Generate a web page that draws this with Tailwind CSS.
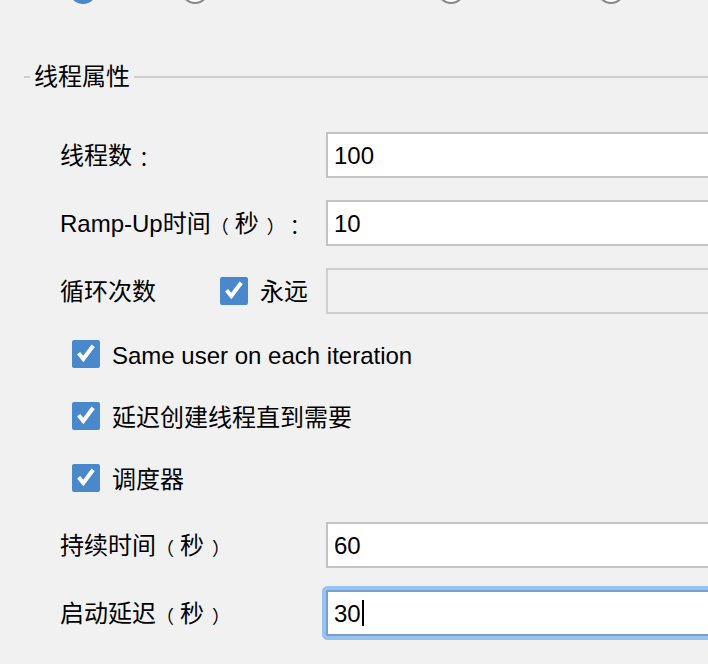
<!DOCTYPE html>
<html lang="zh-CN">
<head>
<meta charset="utf-8">
<meta name="viewport" content="width=device-width, initial-scale=1">
<title>线程属性</title>
<script src="https://cdn.jsdelivr.net/npm/@tailwindcss/browser@4"></script>
</head>
<body class="min-h-screen overflow-x-hidden bg-[#f1f1f1] font-['Liberation_Sans','Noto_Sans_CJK_SC',sans-serif] text-2xl text-black">
<form class="overflow-hidden pb-7">
  <!-- Action radios, scrolled mostly out of view -->
  <div class="flex h-1 items-end overflow-hidden pl-[69px]">
    <input type="radio" name="action" aria-label="继续" checked class="mr-21 size-7 shrink-0 appearance-none rounded-full bg-[#4a88cc]">
    <input type="radio" name="action" aria-label="启动下一进程循环" class="mr-57 size-7 shrink-0 appearance-none rounded-full border-2 border-[#888888] bg-white">
    <input type="radio" name="action" aria-label="停止线程" class="mr-33 size-7 shrink-0 appearance-none rounded-full border-2 border-[#888888] bg-white">
    <input type="radio" name="action" aria-label="停止测试" class="size-7 shrink-0 appearance-none rounded-full border-2 border-[#888888] bg-white">
  </div>

  <fieldset class="mt-[57px] ml-6 border-t-2 border-[#cfcfcf] pl-9">
    <legend class="-ml-[30px] px-1 leading-8">线程属性</legend>

    <div class="mt-[39px] flex flex-col gap-[22px]">
      <div class="flex items-center">
        <label for="threads" class="flex w-[266px] shrink-0 items-center pt-0.5 leading-8">线程数<span class="w-6 pt-1.5 text-center text-xl leading-8 font-['Noto_Sans_CJK_TC',sans-serif]" lang="zh-TW">：</span></label>
        <input id="threads" type="text" value="100" class="h-[46px] min-w-0 flex-1 border-2 border-r-0 border-[#c3c3c3] bg-white pt-0.5 pl-1.5 outline-none">
      </div>

      <div class="flex items-center">
        <label for="ramp" class="flex w-[266px] shrink-0 items-center pt-0.5 leading-8 whitespace-nowrap">Ramp-Up时间<span class="w-6 pt-1.5 text-lg leading-8">（</span>秒<span class="w-6 pt-1.5 pl-2 text-lg leading-8">）</span><span class="w-6 pt-1.5 text-center text-xl leading-8 font-['Noto_Sans_CJK_TC',sans-serif]" lang="zh-TW">：</span></label>
        <input id="ramp" type="text" value="10" class="h-[46px] min-w-0 flex-1 border-2 border-r-0 border-[#c3c3c3] bg-white pt-0.5 pl-1.5 outline-none">
      </div>

      <div class="flex items-center">
        <label for="loops" class="w-40 shrink-0 pt-0.5 leading-8">循环次数</label>
        <div class="flex w-[106px] shrink-0 items-center gap-3">
          <span class="grid shrink-0">
            <input id="forever" type="checkbox" checked class="col-start-1 row-start-1 size-7 appearance-none rounded-xs bg-[#4a88cc]">
            <svg class="pointer-events-none col-start-1 row-start-1 size-7" viewBox="0 0 28 28" fill="none" stroke="white" stroke-width="4" aria-hidden="true"><path d="M6.6 13.2 11.3 19 21.2 5.8"/></svg>
          </span>
          <label for="forever" class="pt-0.5 leading-8">永远</label>
        </div>
        <input id="loops" type="text" disabled class="h-[46px] min-w-0 flex-1 border-2 border-r-0 border-[#cfcfcf] bg-[#f1f1f1] pl-1.5">
      </div>

      <div class="flex h-10 items-start gap-3 pt-1 pl-3">
        <span class="grid shrink-0">
          <input id="same" type="checkbox" checked class="col-start-1 row-start-1 size-7 appearance-none rounded-xs bg-[#4a88cc]">
          <svg class="pointer-events-none col-start-1 row-start-1 size-7" viewBox="0 0 28 28" fill="none" stroke="white" stroke-width="4" aria-hidden="true"><path d="M6.6 13.2 11.3 19 21.2 5.8"/></svg>
        </span>
        <label for="same" class="leading-8">Same user on each iteration</label>
      </div>

      <div class="flex h-10 items-start gap-3 pt-1 pl-3">
        <span class="grid shrink-0">
          <input id="delay-create" type="checkbox" checked class="col-start-1 row-start-1 size-7 appearance-none rounded-xs bg-[#4a88cc]">
          <svg class="pointer-events-none col-start-1 row-start-1 size-7" viewBox="0 0 28 28" fill="none" stroke="white" stroke-width="4" aria-hidden="true"><path d="M6.6 13.2 11.3 19 21.2 5.8"/></svg>
        </span>
        <label for="delay-create" class="leading-8">延迟创建线程直到需要</label>
      </div>

      <div class="flex h-10 items-start gap-3 pt-1 pl-3">
        <span class="grid shrink-0">
          <input id="scheduler" type="checkbox" checked class="col-start-1 row-start-1 size-7 appearance-none rounded-xs bg-[#4a88cc]">
          <svg class="pointer-events-none col-start-1 row-start-1 size-7" viewBox="0 0 28 28" fill="none" stroke="white" stroke-width="4" aria-hidden="true"><path d="M6.6 13.2 11.3 19 21.2 5.8"/></svg>
        </span>
        <label for="scheduler" class="leading-8">调度器</label>
      </div>

      <div class="flex items-center">
        <label for="duration" class="flex w-[266px] shrink-0 items-center pt-0.5 leading-8 whitespace-nowrap">持续时间<span class="w-6 pt-1.5 text-lg leading-8">（</span>秒<span class="w-6 pt-1.5 pl-2 text-lg leading-8">）</span></label>
        <input id="duration" type="text" value="60" class="h-[46px] min-w-0 flex-1 border-2 border-r-0 border-[#c3c3c3] bg-white pt-0.5 pl-1.5 outline-none">
      </div>

      <div class="flex items-center">
        <label for="startup" class="flex w-[266px] shrink-0 items-center pt-0.5 leading-8 whitespace-nowrap">启动延迟<span class="w-6 pt-1.5 text-lg leading-8">（</span>秒<span class="w-6 pt-1.5 pl-2 text-lg leading-8">）</span></label>
        <div class="relative flex min-w-0 flex-1">
          <input id="startup" type="text" value="30" class="h-[46px] min-w-0 flex-1 rounded-l-xs border-2 border-r-0 border-[#7a9fcb] bg-white pt-0.5 pl-1.5 caret-transparent ring-4 ring-[#97c3f3] outline-none">
          <!-- Text caret -->
          <span class="absolute top-[10px] left-9 h-[26px] w-0.5 bg-black" aria-hidden="true"></span>
        </div>
      </div>
    </div>
  </fieldset>
</form>
</body>
</html>
